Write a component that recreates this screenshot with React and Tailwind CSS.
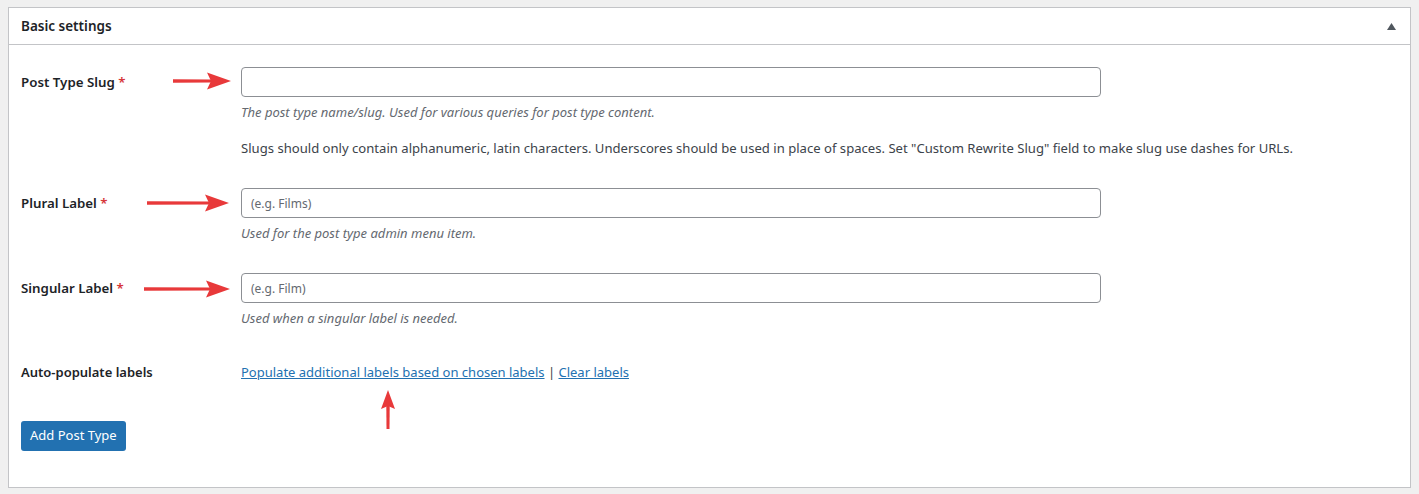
import React from "react";

const font = { fontFamily: "'Noto Sans', 'Liberation Sans', sans-serif" };

function ArrowRight({ className, w }) {
  const hb = w - 25;
  return (
    <svg className={className} width={w} height="20" viewBox={`0 0 ${w} 20`}>
      <path d={`M0 8.3 L${hb + 4} 8.5 L${hb + 4} 11.6 L0 11.7 Z`} fill="#e8393a" />
      <path d={`M${hb} 1.5 L${w - 1} 10 L${hb} 18.5 L${hb + 4} 10 Z`} fill="#e8393a" />
    </svg>
  );
}

function ArrowUp({ className }) {
  return (
    <svg className={className} width="16" height="40" viewBox="0 0 16 40">
      <path d="M8 0 L15 19 L8 16 L1 19 Z" fill="#e8393a" />
      <path d="M6.3 15 L9.7 15 L9.5 39 L6.5 39 Z" fill="#e8393a" />
    </svg>
  );
}

function Label({ children, required }) {
  return (
    <div className="w-[220px] shrink-0 text-[13.3px] font-semibold text-[#1d2327] leading-[30px]">
      {children}
      {required && <span className="text-[#d63638]"> *</span>}
    </div>
  );
}

function Input({ placeholder }) {
  return (
    <input
      type="text"
      placeholder={placeholder}
      className="w-[860px] h-[30px] rounded-[4px] border border-[#8c8f94] bg-white px-[9px] text-[12px] text-[#2c3338] placeholder:text-[#646970] outline-none"
      style={font}
    />
  );
}

export default function App() {
  return (
    <div className="min-h-[494px] bg-[#f0f0f0] px-[8px] pt-[7px] pb-[6px]" style={font}>
      <div className="h-[481px] border border-[#c3c4c7] bg-white">
        <div className="flex h-[37px] items-center justify-between border-b border-[#c3c4c7] pl-[12px] pr-[14px]">
          <h2 className="text-[13.5px] font-semibold text-[#1d2327]">Basic settings</h2>
          <svg width="9" height="7" viewBox="0 0 9 7">
            <path d="M4.5 0 L9 7 L0 7 Z" fill="#50575e" />
          </svg>
        </div>

        <div className="pl-[12px]">
          {/* Row 1 */}
          <div className="relative flex pt-[22px]">
            <Label required>Post Type Slug</Label>
            <ArrowRight w={59} className="absolute left-[152px] top-[26px]" />
            <div>
              <Input placeholder="" />
              <p className="mt-[6px] text-[13px] italic leading-[18px] text-[#646970]">
                The post type name/slug. Used for various queries for post type content.
              </p>
              <p className="mt-[18px] text-[13.1px] leading-[18px] text-[#3c434a]">
                Slugs should only contain alphanumeric, latin characters. Underscores should be used in place of spaces. Set "Custom Rewrite Slug" field to make slug use dashes for URLs.
              </p>
            </div>
          </div>

          {/* Row 2 */}
          <div className="relative flex pt-[31px]">
            <Label required>Plural Label</Label>
            <ArrowRight w={83} className="absolute left-[126px] top-[36px]" />
            <div>
              <Input placeholder="(e.g. Films)" />
              <p className="mt-[6px] text-[13px] italic leading-[18px] text-[#646970]">
                Used for the post type admin menu item.
              </p>
            </div>
          </div>

          {/* Row 3 */}
          <div className="relative flex pt-[31px]">
            <Label required>Singular Label</Label>
            <ArrowRight w={87} className="absolute left-[123px] top-[37px]" />
            <div>
              <Input placeholder="(e.g. Film)" />
              <p className="mt-[6px] text-[13px] italic leading-[18px] text-[#646970]">
                Used when a singular label is needed.
              </p>
            </div>
          </div>

          {/* Row 4 */}
          <div className="relative flex pt-[36px]">
            <div className="w-[220px] shrink-0 text-[13px] font-semibold leading-[18px] text-[#1d2327]">
              Auto-populate labels
            </div>
            <div className="text-[13px] leading-[18px] text-[#3c434a]">
              <a href="#" className="text-[#2271b1] underline">Populate additional labels based on chosen labels</a>
              {" | "}
              <a href="#" className="text-[#2271b1] underline">Clear labels</a>
            </div>
            <ArrowUp className="absolute left-[359px] top-[63px]" />
          </div>

          <div className="pt-[40px]">
            <button
              type="button"
              className="h-[30px] rounded-[3px] bg-[#2271b1] px-[9px] text-[13px] text-white"
              style={font}
            >
              Add Post Type
            </button>
          </div>
        </div>
      </div>
    </div>
  );
}
